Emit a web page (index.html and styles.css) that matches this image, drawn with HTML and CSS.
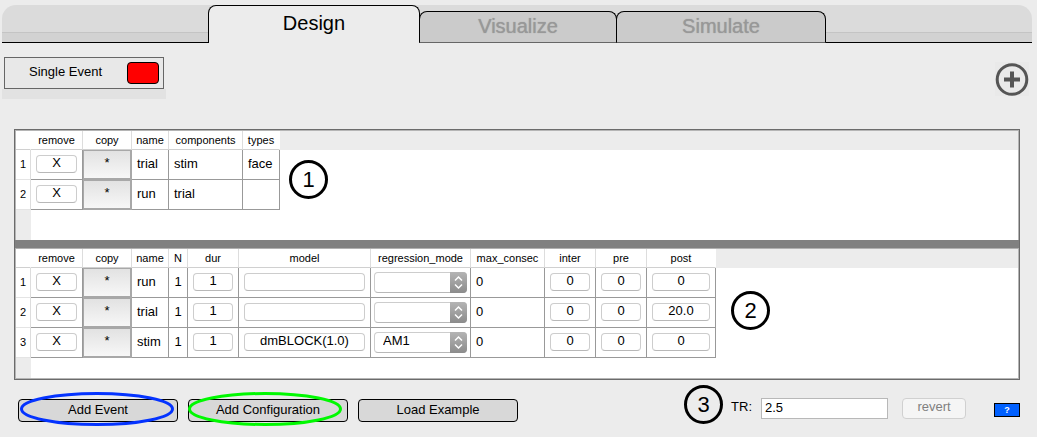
FILE: index.html
```html
<!DOCTYPE html>
<html lang="en">
<head>
<meta charset="utf-8">
<title>Design</title>
<link rel="stylesheet" href="styles.css">
</head>
<body>
<nav class="tabs">
  <button class="tab tab-design" type="button">Design</button>
  <button class="tab tab-visualize" type="button">Visualize</button>
  <button class="tab tab-simulate" type="button">Simulate</button>
</nav>
<header class="toolbar">
  <div class="event-wrap">
    <div class="event">
      <span class="event-name">Single Event</span>
      <button class="swatch" type="button" aria-label="Event color"></button>
    </div>
  </div>
  <button class="plus" type="button" aria-label="Add">
    <svg width="34" height="34" viewBox="0 0 34 34"><circle cx="17" cy="17.500" r="14.800" fill="none" stroke="#555" stroke-width="3"/><path d="M17 9.500v16M9 17.500h16" stroke="#555" stroke-width="4"/></svg>
  </button>
</header>
<main class="frame">
  <section class="pane pane-events">
    <table class="grid">
      <thead><tr><th class="c-row"></th><th class="c-remove">remove</th><th class="c-copy">copy</th><th class="c-name">name</th><th class="c-components">components</th><th class="c-types">types</th></tr></thead>
      <tbody>
        <tr><th>1</th><td class="ctl"><button class="btn">X</button></td><td class="copy"><button class="copy-btn">*</button></td><td>trial</td><td>stim</td><td>face</td></tr>
        <tr><th>2</th><td class="ctl"><button class="btn">X</button></td><td class="copy"><button class="copy-btn">*</button></td><td>run</td><td>trial</td><td></td></tr>
      </tbody>
    </table>
    <span class="mark mark-one">1</span>
  </section>
  <div class="splitter"></div>
  <section class="pane pane-config">
    <table class="grid">
      <thead><tr><th class="c-row"></th><th class="c-remove">remove</th><th class="c-copy">copy</th><th class="c-name">name</th><th class="c-n">N</th><th class="c-dur">dur</th><th class="c-model">model</th><th class="c-mode">regression_mode</th><th class="c-max">max_consec</th><th class="c-inter">inter</th><th class="c-pre">pre</th><th class="c-post">post</th></tr></thead>
      <tbody>
        <tr><th>1</th><td class="ctl"><button class="btn">X</button></td><td class="copy"><button class="copy-btn">*</button></td><td>run</td><td class="num">1</td><td class="ctl"><button class="btn">1</button></td><td class="ctl"><button class="btn" aria-label="model"></button></td>
          <td class="mode"><div class="combo"><select class="select" aria-label="regression_mode"><option></option><option>AM1</option></select><svg class="arrows" width="17" height="21" viewBox="0 0 17 21"><path d="M5 8.500l3.500-3.500 3.500 3.500M5 12.500l3.500 3.500 3.500-3.500" fill="none" stroke="#fff" stroke-width="1.500"/></svg></div></td>
          <td>0</td><td class="ctl"><button class="btn">0</button></td><td class="ctl"><button class="btn">0</button></td><td class="ctl"><button class="btn">0</button></td></tr>
        <tr><th>2</th><td class="ctl"><button class="btn">X</button></td><td class="copy"><button class="copy-btn">*</button></td><td>trial</td><td class="num">1</td><td class="ctl"><button class="btn">1</button></td><td class="ctl"><button class="btn" aria-label="model"></button></td>
          <td class="mode"><div class="combo"><select class="select" aria-label="regression_mode"><option></option><option>AM1</option></select><svg class="arrows" width="17" height="21" viewBox="0 0 17 21"><path d="M5 8.500l3.500-3.500 3.500 3.500M5 12.500l3.500 3.500 3.500-3.500" fill="none" stroke="#fff" stroke-width="1.500"/></svg></div></td>
          <td>0</td><td class="ctl"><button class="btn">0</button></td><td class="ctl"><button class="btn">0</button></td><td class="ctl"><button class="btn">20.0</button></td></tr>
        <tr><th>3</th><td class="ctl"><button class="btn">X</button></td><td class="copy"><button class="copy-btn">*</button></td><td>stim</td><td class="num">1</td><td class="ctl"><button class="btn">1</button></td><td class="ctl"><button class="btn">dmBLOCK(1.0)</button></td>
          <td class="mode"><div class="combo"><select class="select" aria-label="regression_mode"><option>AM1</option></select><svg class="arrows" width="17" height="21" viewBox="0 0 17 21"><path d="M5 8.500l3.500-3.500 3.500 3.500M5 12.500l3.500 3.500 3.500-3.500" fill="none" stroke="#fff" stroke-width="1.500"/></svg></div></td>
          <td>0</td><td class="ctl"><button class="btn">0</button></td><td class="ctl"><button class="btn">0</button></td><td class="ctl"><button class="btn">0</button></td></tr>
      </tbody>
    </table>
    <span class="mark mark-two">2</span>
  </section>
</main>
<footer class="actions">
  <div class="ringed"><button class="action" type="button">Add Event</button>
    <svg class="ring ring-event" width="156" height="36" viewBox="0 0 156 36"><ellipse cx="78" cy="18" rx="75.500" ry="15.500" fill="none" stroke="#0433ff" stroke-width="3"/></svg></div>
  <div class="ringed"><button class="action" type="button">Add Configuration</button>
    <svg class="ring ring-config" width="156" height="36" viewBox="0 0 156 36"><ellipse cx="78" cy="18" rx="75.500" ry="15.500" fill="none" stroke="#00f900" stroke-width="3"/></svg></div>
  <button class="action" type="button">Load Example</button>
  <div class="settings">
    <span class="mark">3</span>
    <label class="tr-label" for="tr">TR:</label>
    <input class="tr" id="tr" type="text" value="2.5">
    <button class="revert" type="button" disabled>revert</button>
    <button class="help" type="button">?</button>
  </div>
</footer>
</body>
</html>
```
FILE: styles.css
```css
* { box-sizing: border-box; }
body {
  margin: 0;
  background: #ececec;
  color: #000;
  font: 13px/16px "Liberation Sans", Arial, sans-serif;
}
button, input, select { font: inherit; color: inherit; margin: 0; padding: 0; }

.tabs {
  display: flex;
  justify-content: center;
  align-items: flex-end;
  height: 38px;
  margin: 0 5px 0 2px;
  border-bottom: 1px solid #000;
  border-radius: 14px 14px 0 0;
  background: linear-gradient(to top, #d2d2d2 9px, #c4c4c4 9px, #c4c4c4 10px, #dbdbdb 10px);
}
body { min-height: 100vh; padding-top: 5px; }
.tab {
  height: 32px;
  margin: 0 0 -1px -1px;
  padding-bottom: 2px;
  border: 1px solid #000;
  border-bottom-color: #666;
  border-radius: 8px 8px 0 0;
  background: #cbcbcb;
  color: #989898;
  font-size: 20px;
  line-height: 24px;
  text-shadow: 0 0 1px #989898;
}
.tab-design {
  width: 212px;
  height: 38px;
  margin-left: 0;
  padding-bottom: 4px;
  border-bottom: 0;
  background: #ececec;
  color: #000;
  text-shadow: none;
}
.tab-visualize { width: 198px; }
.tab-simulate { width: 210px; }

.toolbar {
  display: flex;
  justify-content: space-between;
  align-items: flex-start;
  padding: 14px 8px 0 2px;
}
.event-wrap {
  padding: 0 2px 10px;
  background: linear-gradient(to top, #e2e2e2 10px, #ececec 10px);
}
.event {
  display: flex;
  justify-content: space-between;
  align-items: center;
  width: 160px;
  height: 32px;
  padding: 0 4px 0 24px;
  border: 1px solid #666;
  background: #e8e8e8;
}
.event-name { padding-bottom: 2px; }
.swatch {
  width: 32px;
  height: 22px;
  border: 1px solid #000;
  border-radius: 4px;
  background: #f00;
}
.plus {
  display: flex;
  margin-top: 5px;
  border: 0;
  background: #e9e9e9;
}

.frame {
  margin: 30px 17px 0 14px;
  padding: 1px;
  border: 1px solid #6b6b6b;
  box-shadow: inset 0 0 0 1px #b5b5b5;
}
.pane {
  position: relative;
  background:
    linear-gradient(#ececec, #ececec) 0 0 / 100% 19px no-repeat,
    linear-gradient(#ececec, #ececec) 0 0 / 15px 100% no-repeat,
    #fff;
}
.pane-events { min-height: 109px; }
.pane-config { min-height: 129px; }
.splitter { height: 9px; margin: 0 -1px; background: #808080; border-bottom: 1px solid #b0b0b0; }

.grid { table-layout: fixed; width: 0; border-collapse: separate; border-spacing: 0; }
.grid th {
  padding: 0;
  background: #fff;
  font-size: 11px;
  font-weight: normal;
  text-align: center;
  border-right: 1px solid #ddd;
}
.grid thead th { height: 19px; border-bottom: 1px solid #d0d0d0; line-height: 14px; }
.grid thead th:first-child, .grid thead th:last-child { border-right-color: #fff; }
.grid tbody th { padding-bottom: 2px; border-bottom: 1px solid #e4e4e4; }
.grid td {
  height: 30px;
  padding: 0 0 2px 5px;
  border-right: 1px solid #999;
  border-bottom: 1px solid #999;
}
.grid td.ctl { padding: 0 5px 1px; }
.grid td.copy { padding: 0; border-right-color: #a8a8a8; border-bottom-color: #a8a8a8; }
.grid td.num { padding: 0 0 2px; text-align: center; }
.grid td.mode { padding: 0 3px 1px; }
.c-row { width: 15px; }
.c-remove { width: 52px; }
.c-copy { width: 49px; }
.c-name { width: 37px; }
.c-components { width: 74px; }
.c-types { width: 37px; }
.c-n { width: 19px; }
.c-dur { width: 51px; }
.c-model { width: 132px; }
.c-mode { width: 100px; }
.c-max { width: 74px; }
.c-inter, .c-pre { width: 51px; }
.c-post { width: 69px; }

.btn {
  display: block;
  width: 100%;
  height: 18px;
  border: 1px solid #cdcdcd;
  border-bottom-color: #b8b8b8;
  border-radius: 4px;
  background: #fff;
  line-height: 14px;
  padding-bottom: 2px;
}
.copy-btn {
  display: block;
  width: 100%;
  height: 29px;
  padding-bottom: 3px;
  border: 1px solid #a8a8a8;
  background: linear-gradient(#e2e2e2, #f7f7f7);
}
.combo { display: grid; }
.combo > * { grid-area: 1 / 1; }
.select {
  appearance: none;
  width: 100%;
  height: 21px;
  padding: 0 20px 2px 8px;
  border: 1px solid #cdcdcd;
  border-bottom-color: #b8b8b8;
  border-radius: 4px;
  background: #fff;
}
.arrows {
  justify-self: end;
  border-radius: 0 4px 4px 0;
  background: linear-gradient(#b4b4b4, #8c8c8c);
  pointer-events: none;
}

.mark {
  display: flex;
  justify-content: center;
  align-items: center;
  width: 39px;
  height: 39px;
  border: 3px solid #000;
  border-radius: 50%;
  font-size: 22px;
  line-height: 24px;
}
.mark-one { position: absolute; left: 273px; top: 29px; }
.mark-two { position: absolute; left: 715px; top: 42px; }

.actions {
  display: flex;
  align-items: flex-start;
  gap: 10px;
  padding: 19px 17px 12px 18px;
}
.ringed { position: relative; }
.action {
  display: block;
  width: 160px;
  height: 23px;
  border: 1px solid #000;
  border-radius: 4px;
  background: #d8d8d8;
  padding-bottom: 2px;
}
.ring { position: absolute; top: -8px; pointer-events: none; }
.ring-event { left: 1px; }
.ring-config { left: -1px; }
.settings {
  display: flex;
  align-items: center;
  margin: -14px 0 0 auto;
}
.tr-label { margin: 4px 9px 0 8px; }
.tr {
  width: 127px;
  height: 21px;
  margin-top: 8px;
  padding: 0 3px 2px;
  border: 1px solid #b8b8b8;
  background: #fff;
}
.revert {
  width: 64px;
  height: 21px;
  margin: 8px 28px 0 14px;
  padding-bottom: 3px;
  border: 1px solid #d0d0d0;
  border-radius: 4px;
  background: #f5f5f5;
  color: #808080;
}
.help {
  width: 26px;
  height: 14px;
  margin-top: 10px;
  border: 1px solid #000;
  background: #0060ff;
  color: #fff;
  font-size: 9px;
  font-weight: bold;
  line-height: 12px;
}
```
